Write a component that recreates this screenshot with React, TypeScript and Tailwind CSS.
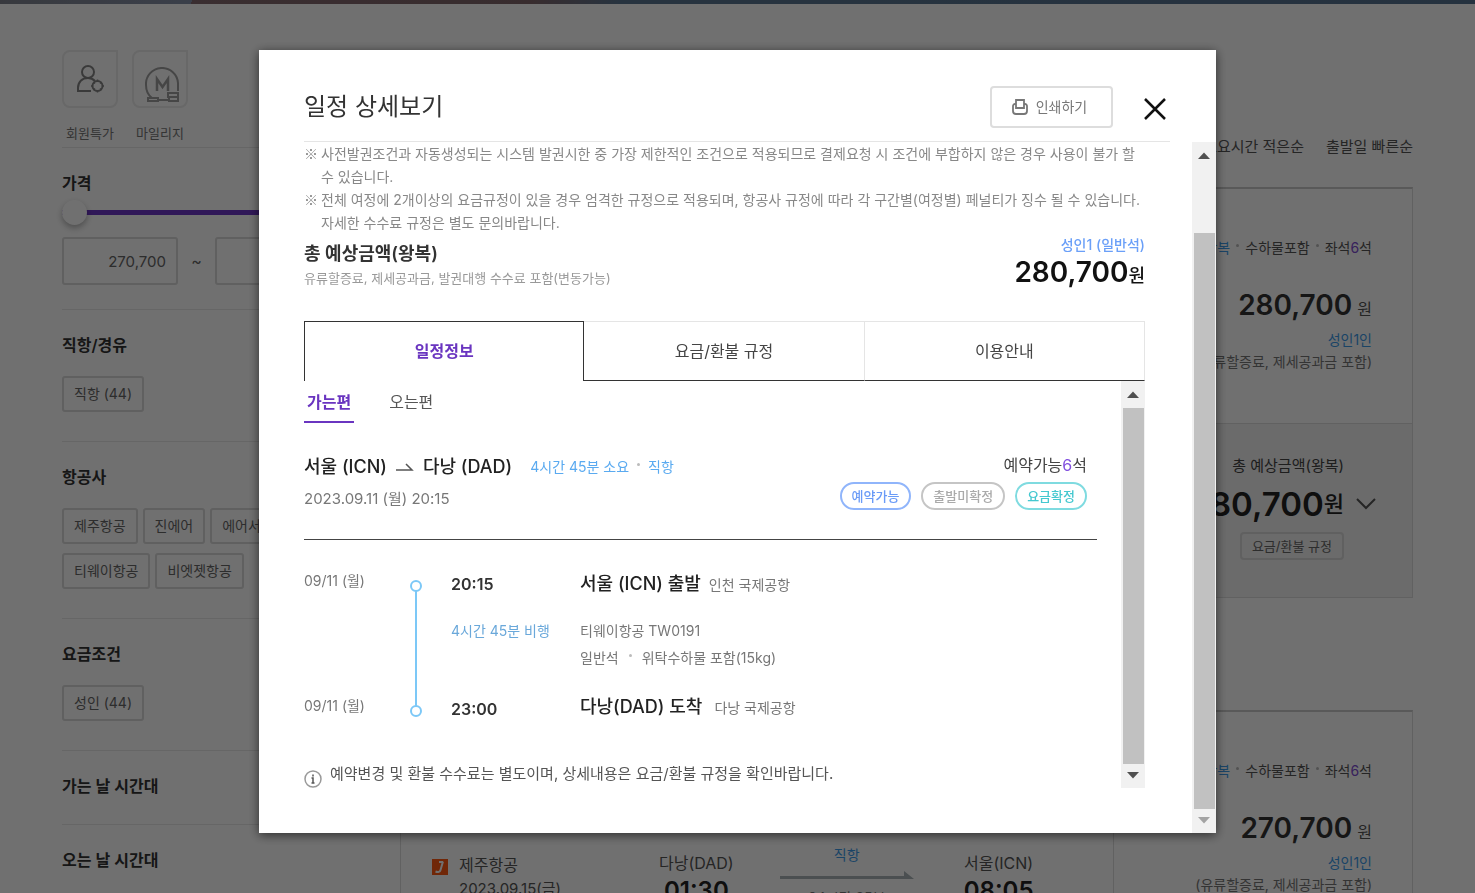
import type { ReactNode } from 'react';
import { useState } from 'react';

const airlines = ['제주항공', '진에어', '에어서울', '티웨이항공', '비엣젯항공'];
const tabs = ['일정정보', '요금/환불 규정', '이용안내'];

function Filter({ title, children }: { title: string; children?: ReactNode }) {
  return (
    <section className="border-t border-[#e8e8e8] pt-[23px] pb-[26px]">
      <h3 className="text-base leading-6 font-semibold text-[#333]">{title}</h3>
      {children && <div className="mt-[19px] flex flex-wrap gap-x-[5px] gap-y-[9px] pb-[3px]">{children}</div>}
    </section>
  );
}

function Chip({ children }: { children: ReactNode }) {
  return (
    <button type="button" className="h-9 rounded-[3px] border-2 border-[#dadada] px-[10px] text-sm leading-5 text-[#666]">
      {children}
    </button>
  );
}

function Dot({ className = 'mx-2' }: { className?: string }) {
  return <span className={`${className} mb-2 inline-block size-[3px] rounded-full bg-[#bbb] align-middle`} />;
}

function FareInfo({ price }: { price: string }) {
  return (
    <div className="flex h-[234px] flex-col items-end pt-[47px] pr-10 whitespace-nowrap">
      <p className="text-sm leading-6 text-[#555]">
        <span className="text-[#3d9be9]">왕복</span>
        <Dot className="mx-[6px]" />수하물포함<Dot className="mx-[6px]" />좌석
        <span className="text-[#7d4bd1]">6</span>석
      </p>
      <p className="mt-[25px] text-[28px] leading-10 font-semibold text-[#333]">
        {price} <span className="-ml-0.5 text-base font-normal text-[#555]">원</span>
      </p>
      <p className="mt-[4px] text-sm leading-[22px] text-[#3d9be9]">성인1인</p>
      <p className="text-sm leading-[22px] text-[#777]">(유류할증료, 제세공과금 포함)</p>
    </div>
  );
}

function Stop({ label, time }: { label: string; time: string }) {
  return (
    <div className="text-center">
      <p className="text-base leading-6 text-[#555]">{label}</p>
      <p className="text-2xl leading-8 font-semibold text-[#222]">{time}</p>
    </div>
  );
}

function ScrollBar({ spacer, disabled }: { spacer: string; disabled?: boolean }) {
  return (
    <div aria-hidden="true" className="flex w-6 shrink-0 flex-col items-center bg-[#f1f1f1]">
      <svg width="24" height="27" viewBox="0 0 24 27">
        <path d="M6 17 12 10.500 18 17z" fill="#505050" />
      </svg>
      <div className={spacer} />
      <div className="w-[21px] flex-1 bg-[#c1c1c1]" />
      <svg width="24" height="24" viewBox="0 0 24 24">
        <path d="M6 8 12 14.500 18 8z" fill={disabled ? '#a3a3a3' : '#505050'} />
      </svg>
    </div>
  );
}

function Background() {
  return (
    <div className="h-screen overflow-hidden">
      <div className="h-1 bg-[linear-gradient(100deg,#80838e_0%,#8590a8_13%,#846a70_13%,#80656a_36%,#5a7590_42%,#56728f_100%)]" />
      <div className="flex px-[62px]">
        <aside className="w-[269px] shrink-0 pt-[46px]">
          <div className="flex gap-[14px]">
            <button type="button" className="text-[13px] leading-5 text-[#777]">
              <span className="flex h-[58px] w-14 items-center justify-center rounded-lg rounded-tr-none border-2 border-[#ececec]">
                <svg width="28" height="28" viewBox="0 0 28 28" fill="none" stroke="#858585" strokeWidth="2">
                  <circle cx="12" cy="7" r="6" />
                  <path d="M15 26H2v-3c0-6 4-10 10-10 3 0 5 1 7 3" />
                  <circle cx="21.500" cy="21" r="5" />
                  <path d="M21.500 14.500v2M21.500 25.500v2M15 21h2M26 21h2M17.500 17l1.500 1.500M24 23.500l1.500 1.500M17.500 25l1.500-1.500M24 18.500l1.500-1.500" strokeWidth="1.500" />
                </svg>
              </span>
              <span className="mt-[15px] block">회원특가</span>
            </button>
            <button type="button" className="text-[13px] leading-5 text-[#777]">
              <span className="flex h-[58px] w-14 items-end justify-center rounded-lg rounded-tr-none border-2 border-[#ececec] pb-1 pl-1">
                <svg width="34" height="35" viewBox="0 0 34 35" fill="none" stroke="#a0a0a0" strokeWidth="2">
                  <path d="M7 31C3 28 1 23 1 18A16 16 0 0 1 33 16v8M13 33h10" />
                  <path d="M12 24V12l5.500 8 5.500-8v12" strokeWidth="2.500" />
                  <path d="M3 34v-3h10v3zM24 34h9v-4h-9zM23 30h10v-4H23z" />
                </svg>
              </span>
              <span className="mt-[15px] block">마일리지</span>
            </button>
          </div>
          <section className="mt-1 border-t border-[#e8e8e8] pt-[23px] pb-6">
            <h3 className="text-base leading-6 font-semibold text-[#333]">가격</h3>
            <input
              type="range"
              aria-label="가격 범위"
              min="270700"
              max="816300"
              defaultValue="270700"
              className="mt-[5px] block h-[25px] w-full appearance-none bg-transparent [&::-webkit-slider-runnable-track]:h-[5px] [&::-webkit-slider-runnable-track]:bg-[#6f38c8] [&::-webkit-slider-thumb]:-mt-[10px] [&::-webkit-slider-thumb]:size-[25px] [&::-webkit-slider-thumb]:appearance-none [&::-webkit-slider-thumb]:rounded-full [&::-webkit-slider-thumb]:bg-white [&::-webkit-slider-thumb]:shadow-[0_3px_6px_rgba(0,0,0,0.3)]"
            />
            <div className="mt-3 flex items-center justify-between text-[#666]">
              <input
                aria-label="최저 가격"
                defaultValue="270,700"
                className="h-12 w-[116px] rounded-[3px] border-2 border-[#dadada] px-[10px] text-right text-[15px]"
              />
              <span>~</span>
              <input
                aria-label="최고 가격"
                defaultValue="816,300"
                className="h-12 w-[116px] rounded-[3px] border-2 border-[#dadada] px-[10px] text-right text-[15px]"
              />
            </div>
          </section>
          <Filter title="직항/경유">
            <Chip>직항 (44)</Chip>
          </Filter>
          <Filter title="항공사">
            {airlines.map((name) => (
              <Chip key={name}>{name}</Chip>
            ))}
          </Filter>
          <Filter title="요금조건">
            <Chip>성인 (44)</Chip>
          </Filter>
          <Filter title="가는 날 시간대" />
          <Filter title="오는 날 시간대" />
        </aside>

        <main className="ml-[69px] flex-1">
          <div className="flex justify-end gap-[22px] pt-[131px] text-[15px] leading-6 text-[#555]">
            <a href="#duration">소요시간 적은순</a>
            <a href="#depart">출발일 빠른순</a>
          </div>
          <article className="mt-7 flex border border-t-2 border-[#ddd] border-t-[#cacaca]">
            <div className="flex-1" />
            <div className="w-[299px] border-l border-[#ddd]">
              <FareInfo price="280,700" />
              <div className="flex h-[174px] flex-col items-end border-t border-[#ddd] bg-[#f3f3f3] pt-[30px]">
                <p className="mr-[68px] text-[15px] leading-6 text-[#444]">총 예상금액(왕복)</p>
                <p className="mr-9 flex items-center text-[33px] leading-[52px] font-semibold text-[#222]">
                  280,700<span className="text-[22px] font-medium">원</span>
                  <svg width="20" height="12" viewBox="0 0 20 12" fill="none" stroke="#555" strokeWidth="2" className="ml-3">
                    <path d="m1 1 9 9 9-9" />
                  </svg>
                </p>
                <button type="button" className="mt-[2px] mr-[68px] h-7 rounded border-2 border-[#dadada] px-[10px] text-[13px] leading-5 text-[#666]">
                  요금/환불 규정
                </button>
              </div>
            </div>
          </article>
          <article className="mt-[112px] flex border border-t-2 border-[#ddd] border-t-[#cacaca]">
            <div className="flex flex-1 items-start pt-[139px] pl-[31px]">
              <svg width="16" height="16" viewBox="0 0 16 16" className="mt-2">
                <path d="M0 0h16v16H0z" fill="#ff5a14" />
                <path d="M11 2.500 8.500 11c-.5 2-2.500 2.500-5 1.500M7 3h4" fill="none" stroke="#fff" strokeWidth="2" />
              </svg>
              <div className="ml-[11px] w-[200px] text-[#555]">
                <p className="text-base leading-7">제주항공</p>
                <p className="text-[15px] leading-5">2023.09.15(금)</p>
              </div>
              <Stop label="다낭(DAD)" time="01:30" />
              <div className="mr-[50px] ml-[46px] -mt-[6px] w-[134px] text-center text-sm leading-5">
                <p className="text-[#3d9be9]">직항</p>
                <svg width="134" height="8" viewBox="0 0 134 8" className="mt-[6px] mb-[9px]">
                  <path d="M0 5h124V0l10 8H0z" fill="#aab4b8" />
                </svg>
                <p className="text-[#777]">04시간 35분</p>
              </div>
              <Stop label="서울(ICN)" time="08:05" />
            </div>
            <div className="w-[299px] border-l border-[#ddd]">
              <FareInfo price="270,700" />
            </div>
          </article>
        </main>
      </div>
    </div>
  );
}

export default function App() {
  const [tab, setTab] = useState(0);
  const [way, setWay] = useState(0);

  return (
    <div className="font-['Inter','Noto_Sans_CJK_KR',sans-serif]">
      <Background />

      <div className="fixed inset-0 flex items-start justify-center bg-black/56 pt-[50px]">
        <div role="dialog" aria-labelledby="dialog-title" className="w-full max-w-[957px] bg-white shadow-[0_2px_10px_rgba(0,0,0,0.6)]">
          <header className="mr-[46px] ml-[45px] flex h-[92px] items-center border-b border-[#e5e5e5] pt-[22px]">
            <h1 id="dialog-title" className="flex-1 text-2xl text-[#333]">일정 상세보기</h1>
            <button type="button" className="flex h-[42px] w-[123px] items-center justify-center gap-2 rounded border-2 border-[#ddd] pr-1 text-sm text-[#777]">
              <svg width="16" height="16" viewBox="0 0 16 16" fill="none" stroke="#777" strokeWidth="1.800">
                <path d="M4 9V1h8v8z" />
                <path d="M4 5H3a2 2 0 0 0-2 2v5a3 3 0 0 0 3 3h8a3 3 0 0 0 3-3V7a2 2 0 0 0-2-2h-1" />
              </svg>
              인쇄하기
            </button>
            <button type="button" aria-label="닫기" className="mr-1 ml-[31px] pt-1">
              <svg width="22" height="22" viewBox="0 0 22 22" fill="none" stroke="#111" strokeWidth="2.500">
                <path d="m1 1 20 20M21 1 1 21" />
              </svg>
            </button>
          </header>

          <div className="flex">
            <div className="mr-[47px] ml-[45px] flex-1 pb-[45px]">
              <ul className="text-sm leading-[23px] text-[#888]">
                <li className="flex">
                  <span className="w-[17px] shrink-0 font-['Noto_Sans_CJK_KR',sans-serif]">※</span>
                  <span>사전발권조건과 자동생성되는 시스템 발권시한 중 가장 제한적인 조건으로 적용되므로 결제요청 시 조건에 부합하지 않은 경우 사용이 불가 할 수 있습니다.</span>
                </li>
                <li className="flex">
                  <span className="w-[17px] shrink-0 font-['Noto_Sans_CJK_KR',sans-serif]">※</span>
                  <span>전체 여정에 2개이상의 요금규정이 있을 경우 엄격한 규정으로 적용되며, 항공사 규정에 따라 각 구간별(여정별) 페널티가 징수 될 수 있습니다. 자세한 수수료 규정은 별도 문의바랍니다.</span>
                </li>
              </ul>
              <div className="flex h-[87px] justify-between">
                <div className="pt-[6px]">
                  <h2 className="text-lg leading-7 font-semibold text-[#333]">총 예상금액(왕복)</h2>
                  <p className="text-[13px] leading-5 text-[#999]">유류할증료, 제세공과금, 발권대행 수수료 포함(변동가능)</p>
                </div>
                <div className="text-right">
                  <p className="text-sm leading-[22px] font-medium text-[#6a9ff8]">성인1 (일반석)</p>
                  <p className="text-[28px] leading-8 font-semibold text-[#111]">
                    280,700<span className="text-lg font-medium">원</span>
                  </p>
                </div>
              </div>

              <div role="tablist" className="grid h-[60px] grid-cols-3">
                {tabs.map((name, i) => (
                  <button
                    key={name}
                    type="button"
                    role="tab"
                    aria-selected={tab === i}
                    onClick={() => setTab(i)}
                    className={
                      tab === i
                        ? 'border border-b-0 border-[#333] pb-px text-base font-semibold text-[#6a35c0]'
                        : 'border-t border-r border-b border-[#e5e5e5] border-b-[#333] text-base text-[#444]'
                    }
                  >
                    {name}
                  </button>
                ))}
              </div>

              <div className="flex">
                <div className="flex-1 pr-6">
                  <div className="flex gap-8 text-base leading-[38px]">
                    {['가는편', '오는편'].map((name, i) => (
                      <button
                        key={name}
                        type="button"
                        onClick={() => setWay(i)}
                        className={
                          way === i
                            ? 'border-b-2 border-[#6a35c0] px-[3px] pt-[2px] font-semibold text-[#6a35c0]'
                            : 'border-b-2 border-transparent px-[3px] pt-[2px] text-[#555]'
                        }
                      >
                        {name}
                      </button>
                    ))}
                  </div>

                  <div className="flex justify-between border-b border-[#444] pt-7 pr-[10px] pb-6">
                    <div>
                      <h3 className="flex items-center text-lg leading-8 font-medium text-[#222]">
                        서울 (ICN)
                        <svg width="18" height="8" viewBox="0 0 18 8" fill="none" stroke="#555" strokeWidth="1.500" className="mx-[9px]">
                          <path d="M0 7h16L10 1" />
                        </svg>
                        다낭 (DAD)
                        <span className="ml-[18px] text-sm leading-7 font-normal text-[#5aaaf0]">
                          4시간 45분 소요<Dot />직항
                        </span>
                      </h3>
                      <p className="text-[15px] leading-8 text-[#777]">2023.09.11 (월) 20:15</p>
                    </div>
                    <div className="text-right">
                      <p className="text-base leading-7 text-[#444]">
                        예약가능<span className="text-[#8250df]">6</span>석
                      </p>
                      <p className="mt-[3px] flex gap-[10px] text-[13px] leading-6 font-medium">
                        <span className="rounded-full border-2 border-[#90b5fb] px-[10px] text-[#6a9bf7]">예약가능</span>
                        <span className="rounded-full border-2 border-[#c5c5c5] px-[10px] text-[#aaa]">출발미확정</span>
                        <span className="rounded-full border-2 border-[#7fdbe0] px-[10px] text-[#45c8d0]">요금확정</span>
                      </p>
                    </div>
                  </div>

                  <div className="mt-[27px] flex text-sm leading-7 text-[#777]">
                    <div className="flex w-[106px] flex-col gap-[97px]">
                      <span>09/11 (월)</span>
                      <span>09/11 (월)</span>
                    </div>
                    <svg width="12" height="138" viewBox="0 0 12 138" fill="none" stroke="#7cc8f7" strokeWidth="2" className="mt-[13px]">
                      <path d="M6 11v116" />
                      <circle cx="6" cy="6" r="5" />
                      <circle cx="6" cy="131" r="5" />
                    </svg>
                    <div className="ml-[29px] w-[129px]">
                      <p className="pt-[3px] text-base leading-7 font-semibold text-[#333]">20:15</p>
                      <p className="mt-[19px] text-[#6aa8da]">4시간 45분 비행</p>
                      <p className="mt-[50px] text-base leading-7 font-semibold text-[#333]">23:00</p>
                    </div>
                    <div>
                      <p className="pt-[3px]">
                        <strong className="mr-[8px] text-lg leading-7 font-medium text-[#222]">서울 (ICN) 출발</strong>인천 국제공항
                      </p>
                      <p className="mt-[18px] leading-[27px]">티웨이항공 TW0191</p>
                      <p className="leading-[27px]">일반석<Dot className="mx-[10px]" />위탁수하물 포함(15kg)</p>
                      <p className="mt-[22px]">
                        <strong className="mr-3 text-lg leading-7 font-medium text-[#222]">다낭(DAD) 도착</strong>다낭 국제공항
                      </p>
                    </div>
                  </div>

                  <p className="mt-[37px] flex gap-2 text-[15px] leading-7 text-[#555]">
                    <svg width="18" height="18" viewBox="0 0 18 18" fill="none" stroke="#999" strokeWidth="1.500" className="mt-[10px]">
                      <circle cx="9" cy="9" r="8" />
                      <path d="M9 4.500v2M7.500 8H9v5M7.500 13h3" stroke="#555" />
                    </svg>
                    예약변경 및 환불 수수료는 별도이며, 상세내용은 요금/환불 규정을 확인바랍니다.
                  </p>
                </div>
                <ScrollBar spacer="h-0" />
              </div>
            </div>
            <ScrollBar spacer="h-16" disabled />
          </div>
        </div>
      </div>
    </div>
  );
}
